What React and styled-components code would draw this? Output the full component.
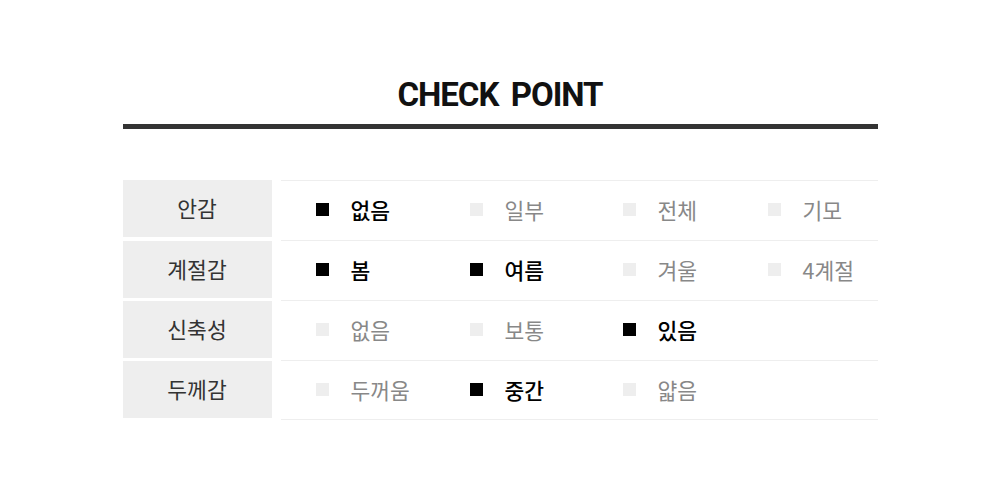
import React from "react"
import styled, { createGlobalStyle } from "styled-components"

const GlobalStyle = createGlobalStyle`
    html, body {
        margin: 0;
        padding: 0;
        background: #fff;
        font-family: 'Noto Sans CJK KR', 'Noto Sans', sans-serif;
    }
`

const Wrapper = styled.div`
    width: 755px;
    margin: 0 auto;
    padding-top: 73px;
`

const Title = styled.h2`
    margin: 0;
    text-align: center;
    font-family: Roboto, 'Noto Sans', sans-serif;
    font-size: 33px;
    line-height: 43px;
    font-weight: 700;
    letter-spacing: -1px;
    word-spacing: 5px;
    color: #111;
`

const TitleRule = styled.div`
    height: 5px;
    margin-top: 8px;
    background-color: #333;
`

const Table = styled.div`
    margin-top: 51px;
    display: flex;
    flex-direction: column;
`

const Row = styled.div`
    display: grid;
    grid-template-columns: 149px 1fr;
    column-gap: 9px;
    height: 60px;
`

const LabelCell = styled.div`
    display: flex;
    align-items: center;
    justify-content: center;
    height: 57px;
    padding-bottom: 2px;
    box-sizing: border-box;
    margin-top: ${props => (props.first ? '0' : '1px')};
    background-color: #eeeeee;
    font-size: 21.5px;
    color: #333;
`

const Options = styled.div`
    display: grid;
    grid-template-columns: 154px 153px 145px 1fr;
    align-items: center;
    padding-left: 35px;
    padding-bottom: 2px;
    border-top: 1px solid #eeeeee;
    border-bottom: ${props => (props.last ? '1px solid #eeeeee' : 'none')};
`

const Option = styled.div`
    display: flex;
    align-items: center;
    font-size: 21.5px;
    font-weight: ${props => (props.checked ? 500 : 400)};
    color: ${props => (props.checked ? '#000' : '#888')};
`

const Box = styled.span`
    width: 13px;
    height: 13px;
    margin-right: 22px;
    background-color: ${props => (props.checked ? '#000' : '#eeeeee')};
`

const rows = [
    { label: '안감', options: [['없음', true], ['일부', false], ['전체', false], ['기모', false]] },
    { label: '계절감', options: [['봄', true], ['여름', true], ['겨울', false], ['4계절', false]] },
    { label: '신축성', options: [['없음', false], ['보통', false], ['있음', true]] },
    { label: '두께감', options: [['두꺼움', false], ['중간', true], ['얇음', false]] },
]

export default function App() {
    return (
        <>
            <GlobalStyle />
            <Wrapper>
                <Title>CHECK POINT</Title>
                <TitleRule />
                <Table>
                    {rows.map((row, i) => (
                        <Row key={row.label}>
                            <LabelCell first={i === 0}>{row.label}</LabelCell>
                            <Options last={i === rows.length - 1}>
                                {row.options.map(([text, checked]) => (
                                    <Option key={text} checked={checked}>
                                        <Box checked={checked} />
                                        {text}
                                    </Option>
                                ))}
                            </Options>
                        </Row>
                    ))}
                </Table>
            </Wrapper>
        </>
    )
}
